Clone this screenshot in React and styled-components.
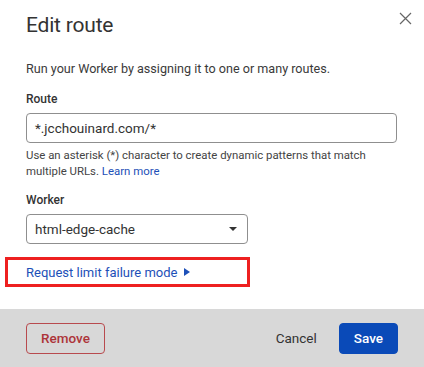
import React from "react";
import styled, { createGlobalStyle } from "styled-components";

const Global = createGlobalStyle`
  html, body {
    margin: 0;
    padding: 0;
    background: #fff;
  }
  body {
    font-family: Roboto, Inter, "Liberation Sans", sans-serif;
    color: #333;
  }
`;

const Modal = styled.div`
  position: relative;
  width: 424px;
  height: 367px;
  background: #fff;
  display: flex;
  flex-direction: column;
  overflow: hidden;
`;

const Content = styled.div`
  flex: 1;
  display: flex;
  flex-direction: column;
  padding: 12px 27px 0 26px;
`;

const Title = styled.h1`
  margin: 0;
  font-size: 21px;
  font-weight: 400;
  line-height: 26px;
  color: #333;
  letter-spacing: -0.2px;
`;

const Close = styled.button`
  position: absolute;
  top: 11px;
  right: 12px;
  width: 14px;
  height: 14px;
  padding: 0;
  border: none;
  background: none;
  display: flex;
  align-items: center;
  justify-content: center;
`;

const Description = styled.p`
  margin: 22px 0 0;
  font-size: 12.6px;
  line-height: 18px;
  color: #3a3a3a;
`;

const Label = styled.div`
  margin-top: ${(p) => p.$mt}px;
  font-size: 12px;
  font-weight: 500;
  line-height: 16px;
  color: #333;
`;

const Input = styled.div`
  margin-top: 6px;
  box-sizing: border-box;
  width: ${(p) => p.$w}px;
  height: 30px;
  border: 1px solid #8f8f8f;
  border-radius: 4px;
  display: flex;
  align-items: center;
  justify-content: space-between;
  padding: 0 10px 0 8px;
  font-size: 13.5px;
  color: #333;
`;

const Caret = styled.span`
  width: 0;
  height: 0;
  border-left: 4px solid transparent;
  border-right: 4px solid transparent;
  border-top: 4px solid #333;
`;

const Help = styled.p`
  margin: 4px 0 0;
  font-size: 11.4px;
  line-height: 16px;
  color: #444;
  a {
    color: #1d50b8;
    text-decoration: none;
  }
`;

const Toggle = styled.div`
  margin: 13px 0 0 -21px;
  box-sizing: border-box;
  width: 245px;
  height: 30px;
  border: 3px solid #ee2020;
  display: flex;
  align-items: center;
  gap: 7px;
  padding-left: 18px;
  font-size: 13px;
  color: #1d50b8;
`;

const Arrow = styled.span`
  width: 0;
  height: 0;
  border-top: 4.5px solid transparent;
  border-bottom: 4.5px solid transparent;
  border-left: 6px solid #1d50b8;
`;

const Footer = styled.div`
  height: 58px;
  box-sizing: border-box;
  background: #d8d8d8;
  display: flex;
  align-items: center;
  padding: 0 26px;
  gap: 21px;
`;

const Button = styled.button`
  box-sizing: border-box;
  height: 31px;
  padding: 0 ${(p) => p.$px}px;
  border-radius: 4px;
  font-family: inherit;
  font-size: 13.5px;
  font-weight: ${(p) => (p.$variant === "plain" ? 400 : 500)};
  border: 1px solid
    ${(p) =>
      p.$variant === "danger"
        ? "#b84a4e"
        : p.$variant === "primary"
        ? "#0a4ab8"
        : "transparent"};
  background: ${(p) => (p.$variant === "primary" ? "#0a4ab8" : "transparent")};
  color: ${(p) =>
    p.$variant === "danger"
      ? "#ad3439"
      : p.$variant === "primary"
      ? "#fff"
      : "#333"};
  margin-left: ${(p) => (p.$push ? "auto" : "0")};
`;

export default function App() {
  return (
    <>
      <Global />
      <Modal>
        <Close aria-label="Close">
          <svg width="13" height="13" viewBox="0 0 13 13">
            <path d="M1 1L12 12M12 1L1 12" stroke="#666" strokeWidth="1.2" />
          </svg>
        </Close>
        <Content>
          <Title>Edit route</Title>
          <Description>Run your Worker by assigning it to one or many routes.</Description>
          <Label $mt={13}>Route</Label>
          <Input $w={371}>*.jcchouinard.com/*</Input>
          <Help>
            Use an asterisk (*) character to create dynamic patterns that match
            multiple URLs. <a href="#">Learn more</a>
          </Help>
          <Label $mt={13}>Worker</Label>
          <Input $w={222}>
            html-edge-cache
            <Caret />
          </Input>
          <Toggle>
            Request limit failure mode
            <Arrow />
          </Toggle>
        </Content>
        <Footer>
          <Button $variant="danger" $px={14}>Remove</Button>
          <Button $variant="plain" $push $px={0}>Cancel</Button>
          <Button $variant="primary" $px={14}>Save</Button>
        </Footer>
      </Modal>
    </>
  );
}
